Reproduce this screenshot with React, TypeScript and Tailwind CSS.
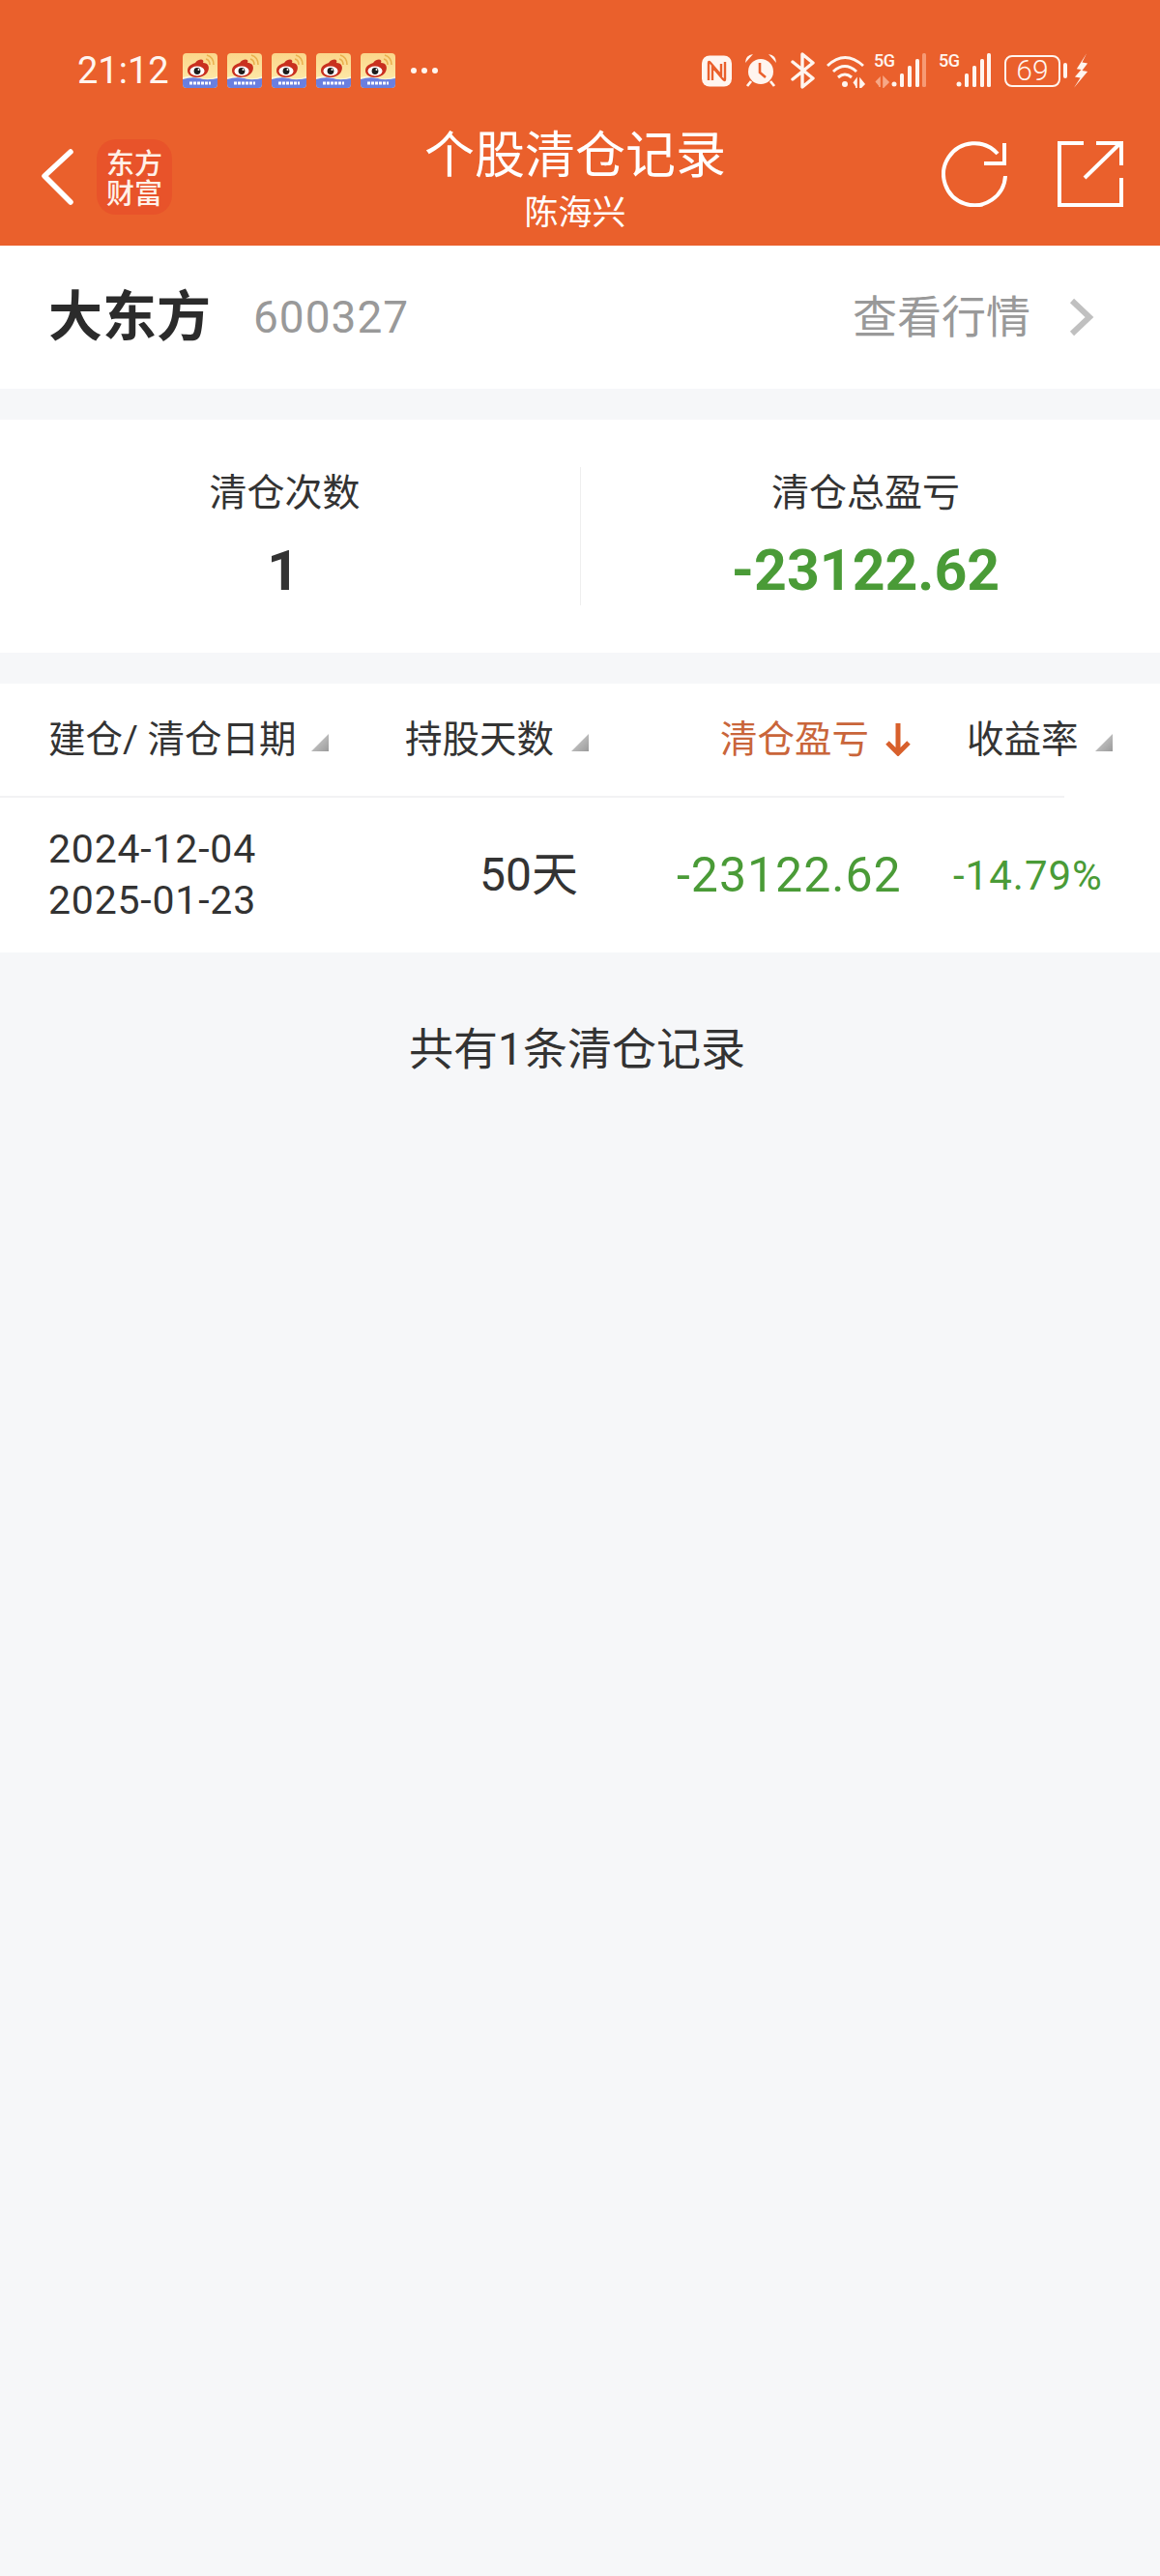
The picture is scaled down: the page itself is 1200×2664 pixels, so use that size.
const FONT = "font-['Roboto','Noto_Sans_CJK_SC',sans-serif]";

function WeiboIcon() {
    return (
        <svg width="36" height="36" viewBox="0 0 36 36" className="shrink-0">
            <defs>
                <linearGradient id="weiboBg" x1="0" y1="0" x2="0" y2="1">
                    <stop offset="0" stopColor="#fbd68a" />
                    <stop offset="1" stopColor="#fdeeb0" />
                </linearGradient>
            </defs>
            <rect width="36" height="36" rx="4" fill="url(#weiboBg)" />
            <path d="M0 26 Q9 23 18 26 T36 25 V32 Q36 36 32 36 H4 Q0 36 0 32 Z" fill="#6a7fe0" />
            <path d="M0 25 Q9 22 18 25 T36 24 V26 Q27 28 18 26 T0 27 Z" fill="#fdf6dc" />
            <path d="M25 2 Q32 4 32 12 M24 6 Q28 7 28 12" stroke="#e9b04e" strokeWidth="1.6" fill="none" />
            <path d="M5 18 C5 13 10 11 13 10 C17 5 23 6 21 10 C27 10 28 15 26 19 C24 23 19 25 14 25 C9 25 5 22 5 18 Z" fill="#c9301f" />
            <ellipse cx="15" cy="18.5" rx="7.5" ry="5" fill="#fff" />
            <circle cx="15" cy="18.5" r="3.4" fill="#1c1c1c" />
            <circle cx="16.5" cy="17" r="1" fill="#fff" />
            <path d="M7 31 H29" stroke="#fff" strokeWidth="3" strokeDasharray="3 1" />
        </svg>
    );
}

function SignalBars({ last }: { last: string }) {
    return (
        <>
            <circle cx="21" cy="32" r="2.5" fill="currentColor" />
            <rect x="27" y="21" width="4" height="14" rx="1.5" fill="currentColor" />
            <rect x="35" y="13" width="4" height="22" rx="1.5" fill="currentColor" />
            <rect x="43" y="6" width="4" height="29" rx="1.5" fill="currentColor" />
            <rect x="50" y="0" width="4" height="35" rx="1.5" fill={last} />
        </>
    );
}

function StatusIcons() {
    return (
        <div className="flex items-center text-[#fff5ef]">
            {/* nfc */}
            <svg width="31" height="33" viewBox="0 0 31 33" className="mr-[13px]">
                <rect x="0" y="0.5" width="31" height="32" rx="8" fill="currentColor" />
                <path d="M7 26 V8 Q7 6 9 8 L20 21 V9 M11 11 V26 M24 7 V25 Q24 27 22 25 L11 12" stroke="#ea602c" strokeWidth="2.4" fill="none" />
            </svg>
            {/* alarm */}
            <svg width="34" height="36" viewBox="0 0 34 36" className="mr-[14px]">
                <circle cx="17" cy="19" r="13" fill="currentColor" />
                <path d="M1 10 Q1 2 9 1 Z M33 10 Q33 2 25 1 Z" fill="currentColor" />
                <path d="M7 29 L3 34 M27 29 L31 34" stroke="currentColor" strokeWidth="2.8" />
                <path d="M16 10 V20 L22 25" stroke="#ea602c" strokeWidth="2.6" fill="none" />
            </svg>
            {/* bluetooth */}
            <svg width="25" height="38" viewBox="0 0 25 38" className="mr-[12px]">
                <path d="M2 10 L23 27 L12 36 V2 L23 11 L2 28" stroke="currentColor" strokeWidth="3.4" fill="none" strokeLinejoin="round" strokeLinecap="round" />
            </svg>
            {/* wifi */}
            <svg width="41" height="36" viewBox="0 0 41 36" className="mr-[8px]">
                <path d="M1 13 Q19 -4 38 13 M7 19 Q19 8 31 19 M12 25 Q19 19 26 25" stroke="currentColor" strokeWidth="3" fill="none" />
                <circle cx="19" cy="32" r="3" fill="currentColor" />
                <path d="M31 36 V27 L28 31 M35 27 V36 L39 32 Z" stroke="currentColor" strokeWidth="1.6" fill="currentColor" />
            </svg>
            {/* sim 1 */}
            <div className="relative w-[54px] h-[36px] mr-[13px]">
                <span className="absolute left-0 top-[-2px] text-[18px] leading-[20px] font-medium tracking-[-0.5px]">5G</span>
                <svg width="54" height="36" viewBox="0 0 54 36" className="absolute inset-0">
                    <path d="M6 35 V26 L2 30 M10 25 V35 L15 30 Z" stroke="#f7a887" strokeWidth="1.6" fill="#f7a887" />
                    <SignalBars last="#f79a74" />
                </svg>
            </div>
            {/* sim 2 */}
            <div className="relative w-[54px] h-[36px] mr-[14px]">
                <span className="absolute left-0 top-[-2px] text-[18px] leading-[20px] font-medium tracking-[-0.5px]">5G</span>
                <svg width="54" height="36" viewBox="0 0 54 36" className="absolute inset-0">
                    <SignalBars last="currentColor" />
                </svg>
            </div>
            {/* battery */}
            <div className="w-[58px] h-[33px] rounded-[8px] border-[2.5px] border-current flex items-center justify-center text-[30px] leading-none font-light mr-[3px]">
                69
            </div>
            <div className="w-[4px] h-[16px] bg-current rounded-sm mr-[7px]" />
            <svg width="15" height="38" viewBox="0 0 16 38">
                <path d="M14 0 L3 17 L8 18 L1 26 L7 27 L0 38 L15 20 L9 19 L15 11 L9 10 Z" fill="currentColor" />
            </svg>
        </div>
    );
}

function SortMark() {
    return (
        <svg width="18" height="18" viewBox="0 0 18 18" className="shrink-0">
            <defs>
                <linearGradient id="sortFill" x1="0" y1="0" x2="1" y2="1">
                    <stop offset="0" stopColor="#d8d8d8" />
                    <stop offset="1" stopColor="#9a9a9a" />
                </linearGradient>
            </defs>
            <polygon points="18,0 18,18 0,18" fill="url(#sortFill)" />
        </svg>
    );
}

export default function App() {
    return (
        <div className={`w-[1200px] min-h-[2664px] bg-[#f6f7f9] ${FONT}`}>

            <header className="h-[254px] bg-[#ea602c] text-white overflow-hidden">
                <div className="flex items-center justify-between h-[38px] mt-[54px] pl-[80px] pr-[74px]">
                    <div className="flex items-center">
                        <span className="w-[109px] text-[38px] leading-none text-[#fff5ef]">21:12</span>
                        <div className="flex gap-[10px]">
                            <WeiboIcon />
                            <WeiboIcon />
                            <WeiboIcon />
                            <WeiboIcon />
                            <WeiboIcon />
                        </div>
                        <div className="flex gap-[5px] ml-[16px]">
                            <span className="w-[6px] h-[6px] rounded-full bg-[#fff5ef]" />
                            <span className="w-[6px] h-[6px] rounded-full bg-[#fff5ef]" />
                            <span className="w-[6px] h-[6px] rounded-full bg-[#fff5ef]" />
                        </div>
                    </div>
                    <StatusIcons />
                </div>

                <div className="grid grid-cols-[1fr_auto_1fr] items-start mt-[34px]">
                    <div className="flex items-center pl-[42px] pt-[18px]">
                        <svg width="36" height="60" viewBox="0 0 36 60" fill="none" stroke="currentColor" strokeWidth="5.5" strokeLinecap="round" strokeLinejoin="round" className="shrink-0">
                            <path d="M31 4 L4 29 L31 56" />
                        </svg>
                        <div className="ml-[22px] w-[78px] h-[78px] rounded-[20px] bg-[#e8532a] flex items-center justify-center text-center text-[29px] leading-[31px] font-medium font-['Noto_Sans_CJK_SC',sans-serif] text-[#fff1e8]">
                            东方<br />财富
                        </div>
                    </div>
                    <div className="text-center pr-[10px]">
                        <div className="text-[52px] leading-[64px] mt-[4px]">个股清仓记录</div>
                        <div className="text-[35px] leading-[44px] mt-[5px]">陈海兴</div>
                    </div>
                    <div className="flex justify-end gap-[52px] pr-[38px] pt-[20px]">
                        <svg width="68" height="68" viewBox="0 0 68 68" fill="none" stroke="currentColor" strokeWidth="4">
                            <path d="M66 36 A32 32 0 1 1 58 13" />
                            <path d="M65 2 V23 H44" />
                        </svg>
                        <svg width="68" height="68" viewBox="0 0 68 68" fill="none" stroke="currentColor" strokeWidth="4">
                            <path d="M27 2 H2 V66 H66 V38" />
                            <path d="M28 38 L64 3" />
                            <path d="M40 2 H66 V25" />
                        </svg>
                    </div>
                </div>
            </header>

            <section className="h-[148px] bg-white flex items-center pl-[50px] pr-[68px]">
                <span className="text-[56px] font-bold text-[#2b2b2b]">大东方</span>
                <span className="ml-[44px] text-[46px] text-[#999999] tracking-[1px]">600327</span>
                <span className="ml-auto text-[46px] text-[#999999]">查看行情</span>
                <svg width="27" height="40" viewBox="0 0 27 40" fill="none" stroke="#c0c0c0" strokeWidth="6" className="ml-[39px]">
                    <path d="M4 3 L22 20 L4 37" />
                </svg>
            </section>

            <section className="h-[241px] mt-[32px] bg-white flex items-center">
                <div className="w-[600px] text-center pr-[14px]">
                    <div className="text-[39px] leading-[50px] text-[#333333] pl-[3px]">清仓次数</div>
                    <div className="text-[58px] leading-[68px] mt-[21px] font-bold text-[#333333]">1</div>
                </div>
                <div className="w-px h-[143px] bg-[#eeeeee]" />
                <div className="flex-1 text-center pr-[10px]">
                    <div className="text-[39px] leading-[50px] text-[#333333]">清仓总盈亏</div>
                    <div className="text-[59px] leading-[68px] mt-[21px] font-bold text-[#4a9b37]">-23122.62</div>
                </div>
            </section>

            <section className="mt-[32px] bg-white">
                <div className="h-[116px] flex items-center text-[38.5px] text-[#333333]">
                    <div className="w-[419px] pl-[50px] flex items-center">
                        <span>建仓/ 清仓日期</span>
                        <span className="ml-[16px] mt-[6px]"><SortMark /></span>
                    </div>
                    <div className="w-[326px] flex items-center">
                        <span>持股天数</span>
                        <span className="ml-[18px] mt-[6px]"><SortMark /></span>
                    </div>
                    <div className="w-[255px] flex items-center text-[#c9653a]">
                        <span>清仓盈亏</span>
                        <svg width="26" height="34" viewBox="0 0 26 34" className="ml-[17px]" fill="none" stroke="#d8602c" strokeWidth="5">
                            <path d="M13 0 V31 M2 20 L13 31 L24 20" />
                        </svg>
                    </div>
                    <div className="flex-1 flex items-center">
                        <span>收益率</span>
                        <span className="ml-[17px] mt-[6px]"><SortMark /></span>
                    </div>
                </div>
                <div className="w-[1101px] h-[2px] bg-[#f2f2f4]" />
                <div className="h-[160px] flex items-center">
                    <div className="w-[496px] pl-[50px] text-[41px] leading-[53px] text-[#333333] tracking-[0.8px]">
                        <div>2024-12-04</div>
                        <div>2025-01-23</div>
                    </div>
                    <div className="w-[204px] text-[48px] text-[#333333]">50天</div>
                    <div className="w-[286px] text-[50px] text-[#4a9b37] tracking-[1px]">-23122.62</div>
                    <div className="flex-1 text-[42px] text-[#4a9b37] tracking-[1px]">-14.79%</div>
                </div>
            </section>

            <div className="mt-[70px] pr-[6px] text-center text-[46px] leading-[60px] text-[#333333]">共有1条清仓记录</div>

        </div>
    );
}
